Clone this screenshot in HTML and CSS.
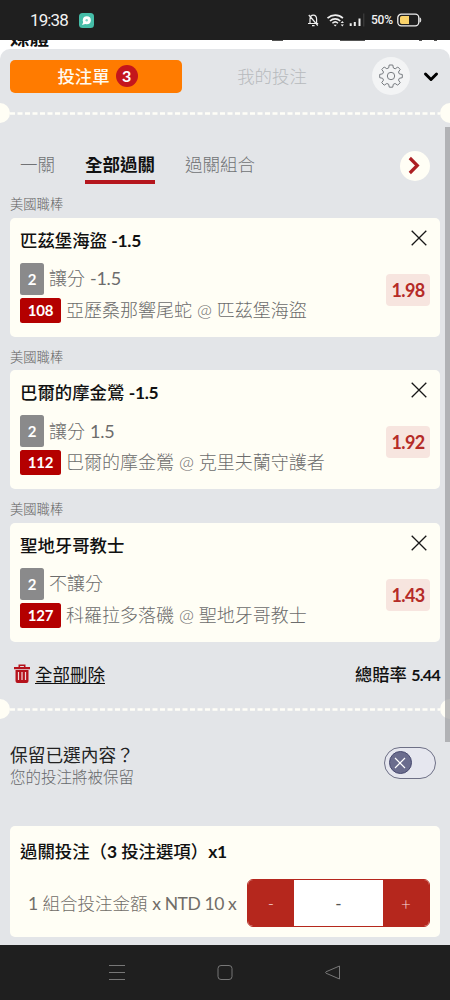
FILE: index.html
```html
<!DOCTYPE html>
<html lang="zh-Hant">
<head>
<meta charset="utf-8">
<title>投注單</title>
<link rel="stylesheet" href="styles.css">
</head>
<body>
<div class="phone">
  <header class="status">
    <span class="clock">19:38</span>
    <svg class="app-dot" width="15" height="15" viewBox="0 0 15 15"><rect width="15" height="15" rx="3.5" fill="#45bda8"/><circle cx="7.8" cy="7.2" r="4" fill="#fff"/><path d="M4.5 8.5 3 12l4-1.3z" fill="#fff"/><circle cx="7.7" cy="7.3" r="1.2" fill="#83d4c7"/></svg>
    <svg class="status-icons" width="61" height="20" viewBox="0 0 61 20" fill="none" stroke="#eee">
      <path d="M2 13.500h10.200M4 13.500V9.300C4 6.800 5.400 5.200 7.300 5.200s3.300 1.600 3.300 4.100v4.200M6 15.600h2.600M2.800 5l9 10.500" stroke-width="1.200"/>
      <path d="M21.500 8.200c4.600-4 11-4 15.400 0" stroke-width="1.700"/><path d="M24 11c3-2.800 7.300-2.800 10.300 0" stroke-width="1.700"/><path d="M26.400 13.200c1.700-1.600 4-1.600 5.600 0" stroke-width="1.500"/>
      <path d="M27.600 14.800h3.200l-1.600 1.800z" fill="#eee" stroke="none"/><path d="m34.700 13 1.600-2 1.600 2zm0 1.500 1.600 2 1.600-2z" fill="#eee" stroke="none"/>
      <path d="M44.700 13.300V16M48.800 12v4M53.500 8.500V16" stroke-width="2"/><path d="M57.800 3.500v13" stroke="#444" stroke-width="1"/>
    </svg>
    <span class="percent">50%</span>
    <svg class="battery" width="25" height="14" viewBox="0 0 25 14"><rect x=".8" y="1.200" width="21" height="11.600" rx="3.500" fill="none" stroke="#eee" stroke-width="1.300"/><path d="M4.800 3H12v8H4.800A1.800 1.800 0 0 1 3 9.200V4.800A1.800 1.800 0 0 1 4.800 3" fill="#fad36a"/><path d="M23 4.800c1 .7 1 3.700 0 4.400z" fill="#ddd" stroke="#ddd"/></svg>
  </header>

  <main class="page">
    <div class="behind"><span>媒體</span><i class="bit bit-a"></i><i class="bit bit-b"></i><i class="bit bit-c"></i><i class="bit bit-d"></i></div>
    <section class="panel">
      <div class="head">
        <div class="slip-tab"><span>投注單</span><b class="count">3</b></div>
        <div class="my-bets">我的投注</div>
        <div class="gear"><svg width="24" height="24" viewBox="0 0 24 24" fill="none" stroke="#777b80" stroke-width="1" stroke-linejoin="round"><path d="M10.200 1h3.600l.6 3 1.800.8 2.600-1.800 2.400 2.400-1.700 2.600.8 1.900 3 .6v3.200l-3 .6-.8 1.800 1.700 2.600-2.500 2.500-2.600-1.700-1.800.8-.6 2.900h-3.400l-.7-3-1.800-.7-2.600 1.700-2.500-2.500 1.800-2.600-.8-1.800-3-.6v-3.300l3-.6.8-1.800-1.700-2.600 2.400-2.400 2.600 1.700 1.900-.8z"/><circle cx="12" cy="12" r="3.700"/></svg></div>
        <svg class="collapse" width="16" height="12" viewBox="0 0 16 12" fill="none" stroke="#000" stroke-width="3" stroke-linecap="round" stroke-linejoin="round"><path d="m2.500 3 5.500 5.500L13.500 3"/></svg>
      </div>
      <div class="tear"><svg width="450" height="20"><path d="M10 10.500H440" stroke="#fffef7" stroke-width="2.600" stroke-dasharray="5 2.500"/><circle cx="0" cy="10" r="10" fill="#fffef5"/><circle cx="450" cy="10" r="10" fill="#fffef5"/></svg></div>

      <nav class="modes">
        <span class="mode">一關</span><span class="mode active">全部過關</span><span class="mode">過關組合</span>
        <div class="next"><svg width="30" height="30" viewBox="0 0 30 30" fill="none" stroke="#ac1f22" stroke-width="3.200"><path d="m9.800 7 7.500 7.500L9.800 22"/></svg></div>
      </nav>

      <div class="bets">
        <div class="bet">
          <div class="league">美國職棒</div>
          <article class="card pick">
            <h3>匹茲堡海盜 <span class="num">-1.5</span></h3>
            <div class="line"><b class="tag gray">2</b><span>讓分 <span class="latin">-1.5</span></span></div>
            <div class="line"><b class="tag red">108</b><span>亞歷桑那響尾蛇 <span class="latin at">@</span> 匹茲堡海盜</span></div>
            <svg class="close" width="16" height="16" viewBox="0 0 16 16"><path d="m.7.7 14.600 14.600m0-14.600L.7 15.300" stroke="#171717" stroke-width="1.300"/></svg>
            <b class="odds">1.98</b>
          </article>
        </div>
        <div class="bet">
          <div class="league">美國職棒</div>
          <article class="card pick">
            <h3>巴爾的摩金鶯 <span class="num">-1.5</span></h3>
            <div class="line"><b class="tag gray">2</b><span>讓分 <span class="latin">1.5</span></span></div>
            <div class="line"><b class="tag red">112</b><span>巴爾的摩金鶯 <span class="latin at">@</span> 克里夫蘭守護者</span></div>
            <svg class="close" width="16" height="16" viewBox="0 0 16 16"><path d="m.7.7 14.600 14.600m0-14.600L.7 15.300" stroke="#171717" stroke-width="1.300"/></svg>
            <b class="odds">1.92</b>
          </article>
        </div>
        <div class="bet">
          <div class="league">美國職棒</div>
          <article class="card pick">
            <h3>聖地牙哥教士</h3>
            <div class="line"><b class="tag gray">2</b><span>不讓分</span></div>
            <div class="line"><b class="tag red">127</b><span>科羅拉多落磯 <span class="latin at">@</span> 聖地牙哥教士</span></div>
            <svg class="close" width="16" height="16" viewBox="0 0 16 16"><path d="m.7.7 14.600 14.600m0-14.600L.7 15.300" stroke="#171717" stroke-width="1.300"/></svg>
            <b class="odds">1.43</b>
          </article>
        </div>
      </div>

      <div class="summary">
        <svg width="16" height="19" viewBox="0 0 16 19"><path d="M5.300 3V1.300h5.400V3" fill="none" stroke="#b5121b" stroke-width="1.600"/><path d="M0 3h16v2.200H0zM1.500 6h13v11a2 2 0 0 1-2 2h-9a2 2 0 0 1-2-2z" fill="#b5121b"/><path d="M4.500 8v8M8 8v8M11.500 8v8" stroke="#f0dadb" stroke-width="1.200"/></svg>
        <span class="delete">全部刪除</span>
        <span class="total">總賠率 <span class="total-num">5.44</span></span>
      </div>
      <div class="tear"><svg width="450" height="20"><path d="M10 10.500H440" stroke="#fffef7" stroke-width="2.600" stroke-dasharray="5 2.500"/><circle cx="0" cy="10" r="10" fill="#fffef5"/><circle cx="450" cy="10" r="10" fill="#fffef5"/></svg></div>

      <div class="keep">
        <div><div class="keep-title">保留已選內容？</div><div class="keep-note">您的投注將被保留</div></div>
        <div class="toggle"><div class="knob"><svg width="12" height="12" viewBox="0 0 12 12"><path d="m1 1 10 10m0-10L1 11" stroke="#fff" stroke-width="1.200"/></svg></div></div>
      </div>

      <div class="card stake">
        <h3>過關投注（<span class="num">3</span> 投注選項）<span class="num">x1</span></h3>
        <div class="stake-row">
          <span class="stake-label"><span class="latin">1</span> 組合投注金額 <span class="latin">x NTD 10 x</span></span>
          <div class="stepper"><span class="step">-</span><span class="amount">-</span><span class="step">+</span></div>
        </div>
      </div>
      <div class="scrollbar"></div>
    </section>
  </main>

  <footer class="navbar">
    <svg width="16" height="16" viewBox="0 0 16 16" stroke="#777" fill="none"><path d="M0 .5h16M0 7.500h16M0 14.500h16"/></svg>
    <svg width="16" height="16" viewBox="0 0 16 16" stroke="#777" fill="none"><rect x="1" y=".5" width="14" height="14" rx="3"/></svg>
    <svg width="16" height="16" viewBox="0 0 16 16" stroke="#777" fill="none" stroke-linejoin="round"><path d="M14.500 1v13L1 8.200q-1-.7 0-1.400z"/></svg>
  </footer>
</div>
</body>
</html>
```
FILE: styles.css
```css
* { box-sizing: border-box; }
body { margin: 0; background: #e3e5e8; font-family: Lato, "Noto Sans CJK TC", sans-serif; }
svg { display: block; flex: none; }
h3 { margin: 0; }
.phone { width: 450px; height: 1000px; display: flex; flex-direction: column; overflow: hidden; }

.status { height: 40px; flex: none; background: #1f1f1f; color: #f2f2f2; display: flex; align-items: center; padding-left: 30px; }
.clock { width: 49px; font: 17px/18px Roboto, sans-serif; letter-spacing: -.9px; white-space: nowrap; }
.status-icons { margin-left: 212px; }
.percent { width: 26px; margin-left: 4px; font: 500 12px/20px Roboto, sans-serif; letter-spacing: -.2px; }

.page { height: 905px; flex: none; background: #fff; overflow: hidden; display: flex; flex-direction: column; }
.behind { height: 9px; flex: none; position: relative; overflow: hidden; padding-left: 10px; }
.behind span { display: block; margin-top: -11px; font-size: 19.500px; line-height: 18px; font-weight: 700; color: #111; }
.bit { position: absolute; top: 0; height: 1px; background: #555; }
.bit-a { left: 272px; width: 11px; }
.bit-b { left: 340px; width: 25px; }
.bit-c { left: 419px; width: 3px; }
.bit-d { left: 434px; width: 3px; }

.panel { position: relative; height: 896px; background: #e3e5e8; border-radius: 10px 10px 0 0; }
.head { height: 54px; display: flex; align-items: center; padding-left: 10px; }
.slip-tab { width: 172px; height: 33px; border-radius: 5px; background: #ff7b00; color: #fffaf0; display: flex; align-items: center; justify-content: center; gap: 6px; font-size: 17.400px; font-weight: 500; padding-left: 3px; }
.slip-tab span, .my-bets { position: relative; top: -1px; }
.count { width: 22px; height: 22px; border-radius: 50%; background: #c4161c; color: #fff; font-size: 16px; line-height: 22px; text-align: center; }
.my-bets { width: 180px; text-align: center; font-size: 17.400px; color: #b7babd; font-weight: 300; }
.gear { width: 38px; height: 38px; margin-left: 10px; border-radius: 50%; background: #f3f4f5; display: flex; align-items: center; justify-content: center; }
.collapse { margin: 2px 0 0 13px; }
.tear { height: 20px; }

.modes { height: 68px; display: flex; padding: 24px 0 0 20px; gap: 30px; font-size: 17.500px; color: #707275; font-weight: 300; }
.mode { height: 37px; line-height: 35px; white-space: nowrap; }
.active { color: #111; font-weight: 700; border-bottom: 4px solid #b5161d; }
.next { margin: 4px 20px 0 auto; width: 30px; height: 30px; border-radius: 50%; background: #fffef5; }

.league { height: 26.500px; line-height: 26px; font-size: 13.300px; font-weight: 300; color: #606060; }
.bets { padding: 0 10px; display: flex; flex-direction: column; gap: 7px; }
.card { background: #fffef5; border-radius: 5px; }
.pick { position: relative; height: 119px; padding: 10px; display: flex; flex-direction: column; }
.card h3 { height: 26px; line-height: 26px; font-size: 17.400px; font-weight: 500; color: #111; }
.num { font-weight: 700; letter-spacing: -.3px; }
.latin { font-weight: 400; letter-spacing: -.2px; }
.at { font-weight: 300; letter-spacing: 0; }
.line { display: flex; align-items: center; gap: 5px; font-size: 18px; font-weight: 300; color: #6c6c6c; height: 32px; margin-top: 9px; white-space: nowrap; }
.line > span { position: relative; top: -1.500px; }
.line + .line { height: 25px; margin-top: 3px; }
.tag { color: #fff; font-size: 15px; font-weight: 700; text-align: center; border-radius: 2.500px; }
.gray { width: 24px; height: 32px; line-height: 32px; background: #8a8a8b; }
.red { width: 41px; height: 25px; line-height: 24px; background: #b40000; letter-spacing: -.2px; }
.close { position: absolute; right: 13px; top: 12px; }
.odds { position: absolute; right: 10px; top: 56px; width: 44px; height: 32px; border-radius: 4px; background: #f7e5df; color: #b52b27; font-size: 18px; letter-spacing: -.6px; line-height: 32px; text-align: center; }

.summary { height: 57px; display: flex; align-items: center; padding: 7px 10px 0 14px; font-size: 17.500px; color: #111; }
.delete { margin-left: 5px; text-decoration: underline; text-underline-offset: 2px; text-decoration-thickness: 1px; }
.total { margin-left: auto; font-weight: 500; font-size: 17.300px; }
.total-num { font-size: 16px; font-weight: 700; letter-spacing: -.7px; }

.keep { height: 107px; display: flex; justify-content: space-between; padding: 25px 14px 0 10px; }
.keep-title { font-size: 17.700px; line-height: 24px; color: #222; }
.keep-note { margin-top: -1px; font-size: 15.500px; line-height: 20px; font-weight: 300; color: #66686b; }
.toggle { width: 52px; height: 32px; margin-top: 3px; border: 1px solid #6e7086; border-radius: 16px; padding: 3.500px; background: #e6e7ef; }
.knob { width: 23px; height: 23px; border-radius: 50%; background: #6a6c8d; border: 1px solid #484a70; display: flex; align-items: center; justify-content: center; }

.stake { margin: 0 10px; height: 111px; padding: 13px 10px 0; }
.stake-row { height: 48px; margin-top: 14px; display: flex; justify-content: space-between; align-items: center; }
.stake-label { padding-left: 8px; font-size: 17.500px; color: #716d68; font-weight: 300; white-space: nowrap; }
.stake-label .latin { letter-spacing: -.4px; }
.stepper { width: 183px; height: 48px; display: flex; border: 1px solid #b5271d; border-radius: 6px; overflow: hidden; background: #fff; }
.step { width: 46px; background: #b5271d; color: #f8dcd8; line-height: 48px; text-align: center; font-size: 17px; font-weight: 300; }
.amount { flex: 1; text-align: center; line-height: 48px; font-size: 17px; color: #555; }
.scrollbar { position: absolute; right: 0; top: 78px; width: 5px; height: 615px; background: rgba(150, 151, 153, .65); }

.navbar { height: 55px; flex: none; background: #1f1f1f; display: flex; align-items: center; justify-content: center; gap: 92px; }
```
